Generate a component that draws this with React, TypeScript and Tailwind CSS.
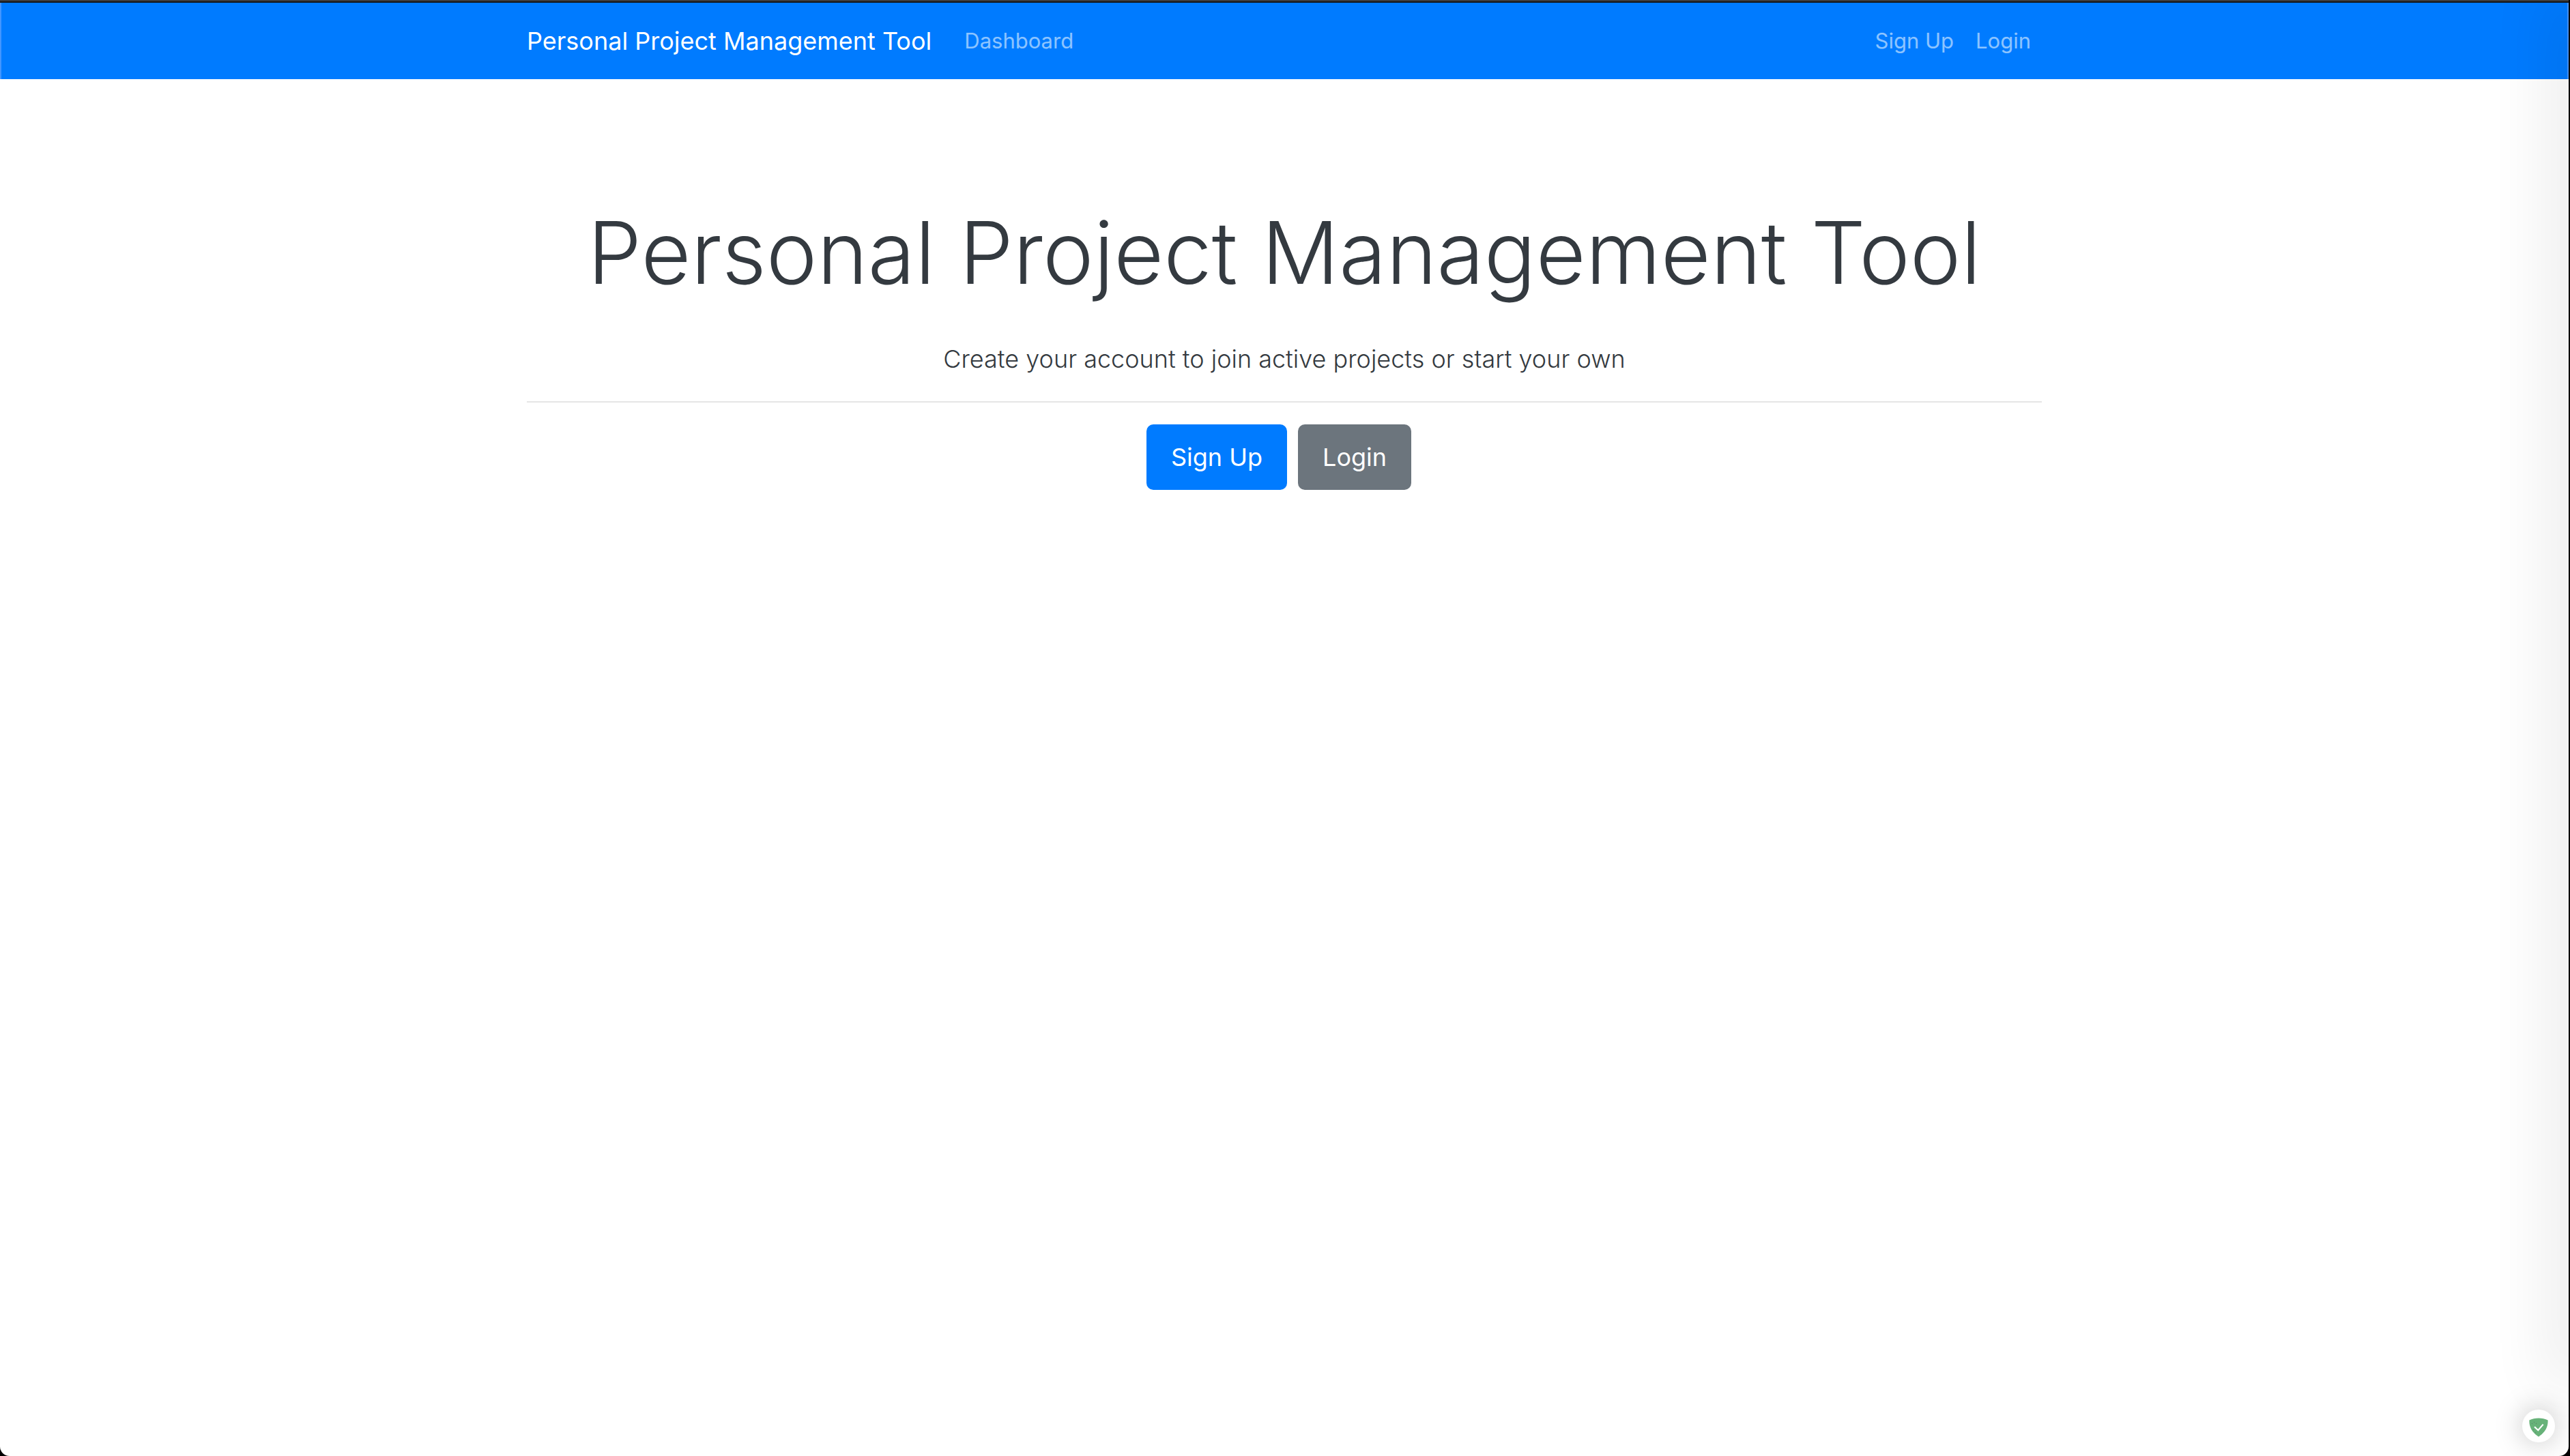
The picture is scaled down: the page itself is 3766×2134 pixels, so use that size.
const navLink = "text-[31px] leading-[48px] text-white/55 hover:text-white/75";
const button = "mr-4 flex h-24 items-center rounded-[10px] px-9 text-[36px] leading-[60px] text-white";

function ShieldIcon() {
  return (
    <svg viewBox="0 0 28 28" className="size-7" aria-hidden="true">
      <path
        d="M14 0.6C9.4 0.6 4.2 1.5 0.4 3.6c0 4.2-.5 14.8 13.6 24.2C28.1 18.4 27.6 7.8 27.6 3.6 23.8 1.5 18.6 .6 14 .6Z"
        fill="#67b279"
      />
      <path d="M8 13.2 13.3 18.2 20.7 9.6" fill="none" stroke="#fff" strokeWidth="2.2" />
      <g fill="#5c8a68">
        <circle cx="4.5" cy="8.5" r="0.7" />
        <circle cx="7.5" cy="6.5" r="0.7" />
        <circle cx="10.5" cy="8.5" r="0.7" />
        <circle cx="6.5" cy="17.5" r="0.7" />
        <circle cx="9.5" cy="21.5" r="0.7" />
      </g>
    </svg>
  );
}

export default function App() {
  return (
    <div className="flex min-h-screen flex-col bg-black pr-[2px] font-[Inter,sans-serif] text-[#343a40]">
      <div className="h-[2px] bg-[#3d3d3d]" />
      <div className="h-[2px] bg-[#141414]" />
      <div className="relative flex grow flex-col overflow-hidden rounded-b-[14px] bg-white">
        <nav className="border-x-2 border-[#4396ff] bg-[#007bff] py-[26px]">
          <div className="mx-auto flex h-[60px] max-w-[2220px] items-center">
            <a href="#" className="mr-12 text-[36px] leading-[60px] text-white">
              Personal Project Management Tool
            </a>
            <a href="#dashboard" className={navLink}>Dashboard</a>
            <div className="mr-4 ml-auto flex gap-8">
              <a href="#signup" className={navLink}>Sign Up</a>
              <a href="#login" className={navLink}>Login</a>
            </div>
          </div>
        </nav>
        <main className="mx-auto w-full max-w-[2220px] pt-42 text-center">
          <h1 className="text-[126px] leading-[172px] font-light">Personal Project Management Tool</h1>
          <p className="mt-10 text-[36px] leading-[60px] font-light">
            Create your account to join active projects or start your own
          </p>
          <hr className="my-8 border-t-2 border-black/10" />
          <div className="flex justify-center">
            <a href="#signup" className={`${button} bg-[#007bff]`}>Sign Up</a>
            <a href="#login" className={`${button} bg-[#6c757d]`}>Login</a>
          </div>
        </main>
        <div className="pointer-events-none absolute top-0 right-0 bottom-[120px] w-1 translate-x-1 shadow-[0_0_90px_20px_rgba(0,0,0,0.12)]" />
        <button
          type="button"
          aria-label="Protection status"
          className="absolute right-5 bottom-5 flex size-12 items-center justify-center rounded-full bg-white pt-1 shadow-[0_0_40px_rgba(0,0,0,0.25)]"
        >
          <ShieldIcon />
        </button>
      </div>
    </div>
  );
}
